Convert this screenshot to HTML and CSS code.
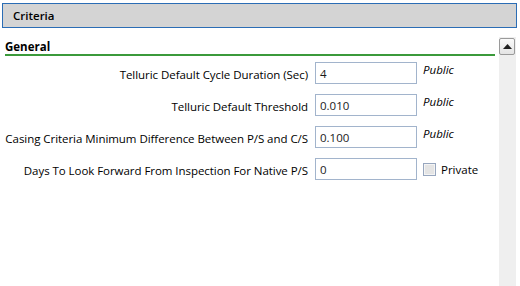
FILE: index.html
```html
<!DOCTYPE html>
<html>
<head>
<meta charset="utf-8">
<link rel="stylesheet" href="styles.css">
</head>
<body>
<div class="window">
  <div class="header"><span class="header-title">Criteria</span></div>
  <div class="main">
    <div class="content">
      <div class="section-title">General</div>
      <div class="form">
        <label class="lbl">Telluric Default Cycle Duration (Sec)</label>
        <div class="input">4</div>
        <div class="status">Public</div>

        <label class="lbl">Telluric Default Threshold</label>
        <div class="input">0.010</div>
        <div class="status">Public</div>

        <label class="lbl">Casing Criteria Minimum Difference Between P/S and C/S</label>
        <div class="input">0.100</div>
        <div class="status">Public</div>

        <label class="lbl">Days To Look Forward From Inspection For Native P/S</label>
        <div class="input">0</div>
        <div class="check"><span class="box"></span><span class="check-text">Private</span></div>
      </div>
    </div>
    <div class="scrollbar">
      <div class="scroll-up">
        <svg width="9" height="5" viewBox="0 0 9 5"><path d="M0 5 L4.5 0 L9 5 Z" fill="#222"/></svg>
      </div>
    </div>
  </div>
</div>
</body>
</html>
```
FILE: styles.css
```css
html, body {
  margin: 0;
  padding: 0;
  background: #ffffff;
}
body {
  font-family: "Open Sans", "Noto Sans", "Liberation Sans", sans-serif;
  font-size: 11.5px;
  color: #000;
}
.window {
  width: 520px;
  height: 286px;
  display: flex;
  flex-direction: column;
  overflow: hidden;
}
.header {
  margin: 3px 3px 0 2px;
  height: 23px;
  border: 1px solid #2b6db5;
  background: #d4d4d4;
  display: flex;
  align-items: center;
  padding-left: 10px;
}
.header-title {
  font-weight: 600;
  font-size: 11.5px;
}
.main {
  flex: 1;
  display: flex;
  margin-top: 9px;
}
.content {
  width: 497px;
}
.section-title {
  font-weight: 700;
  font-size: 11.5px;
  margin-left: 5px;
  margin-right: 2px;
  padding-top: 2px;
  height: 15px;
  border-bottom: 2px solid #3b9a3b;
}
.form {
  display: grid;
  grid-template-columns: 303px 102px auto;
  grid-auto-rows: 22px;
  column-gap: 7px;
  row-gap: 10px;
  margin-top: 6px;
  padding-left: 5px;
}
.lbl {
  text-align: right;
  white-space: nowrap;
  align-self: center;
  padding-top: 3px;
  letter-spacing: -0.05px;
}
.input {
  box-sizing: border-box;
  border: 1px solid #a2b4cc;
  background: #fff;
  padding: 3px 0 0 4px;
  color: #1a1a1a;
}
.status {
  font-style: italic;
  padding-top: 0px;
  margin-left: -1px;
}
.check {
  display: flex;
  align-items: center;
  align-self: center;
  margin-left: -1px;
  gap: 5px;
}
.box {
  width: 11px;
  height: 11px;
  border: 1px solid #97a6be;
  background: #e4e4e4;
  box-shadow: inset 0 0 0 1px #f4f4f4;
}
.scrollbar {
  width: 17px;
  margin-left: 2px;
  background: #efefef;
  padding-top: 1px;
}
.scroll-up {
  box-sizing: border-box;
  width: 16px;
  height: 17px;
  margin-left: 0;
  border: 1px solid #9a9a9a;
  border-radius: 2px;
  background: linear-gradient(#fbfbfb, #e4e4e4);
  display: flex;
  align-items: center;
  justify-content: center;
}
```
